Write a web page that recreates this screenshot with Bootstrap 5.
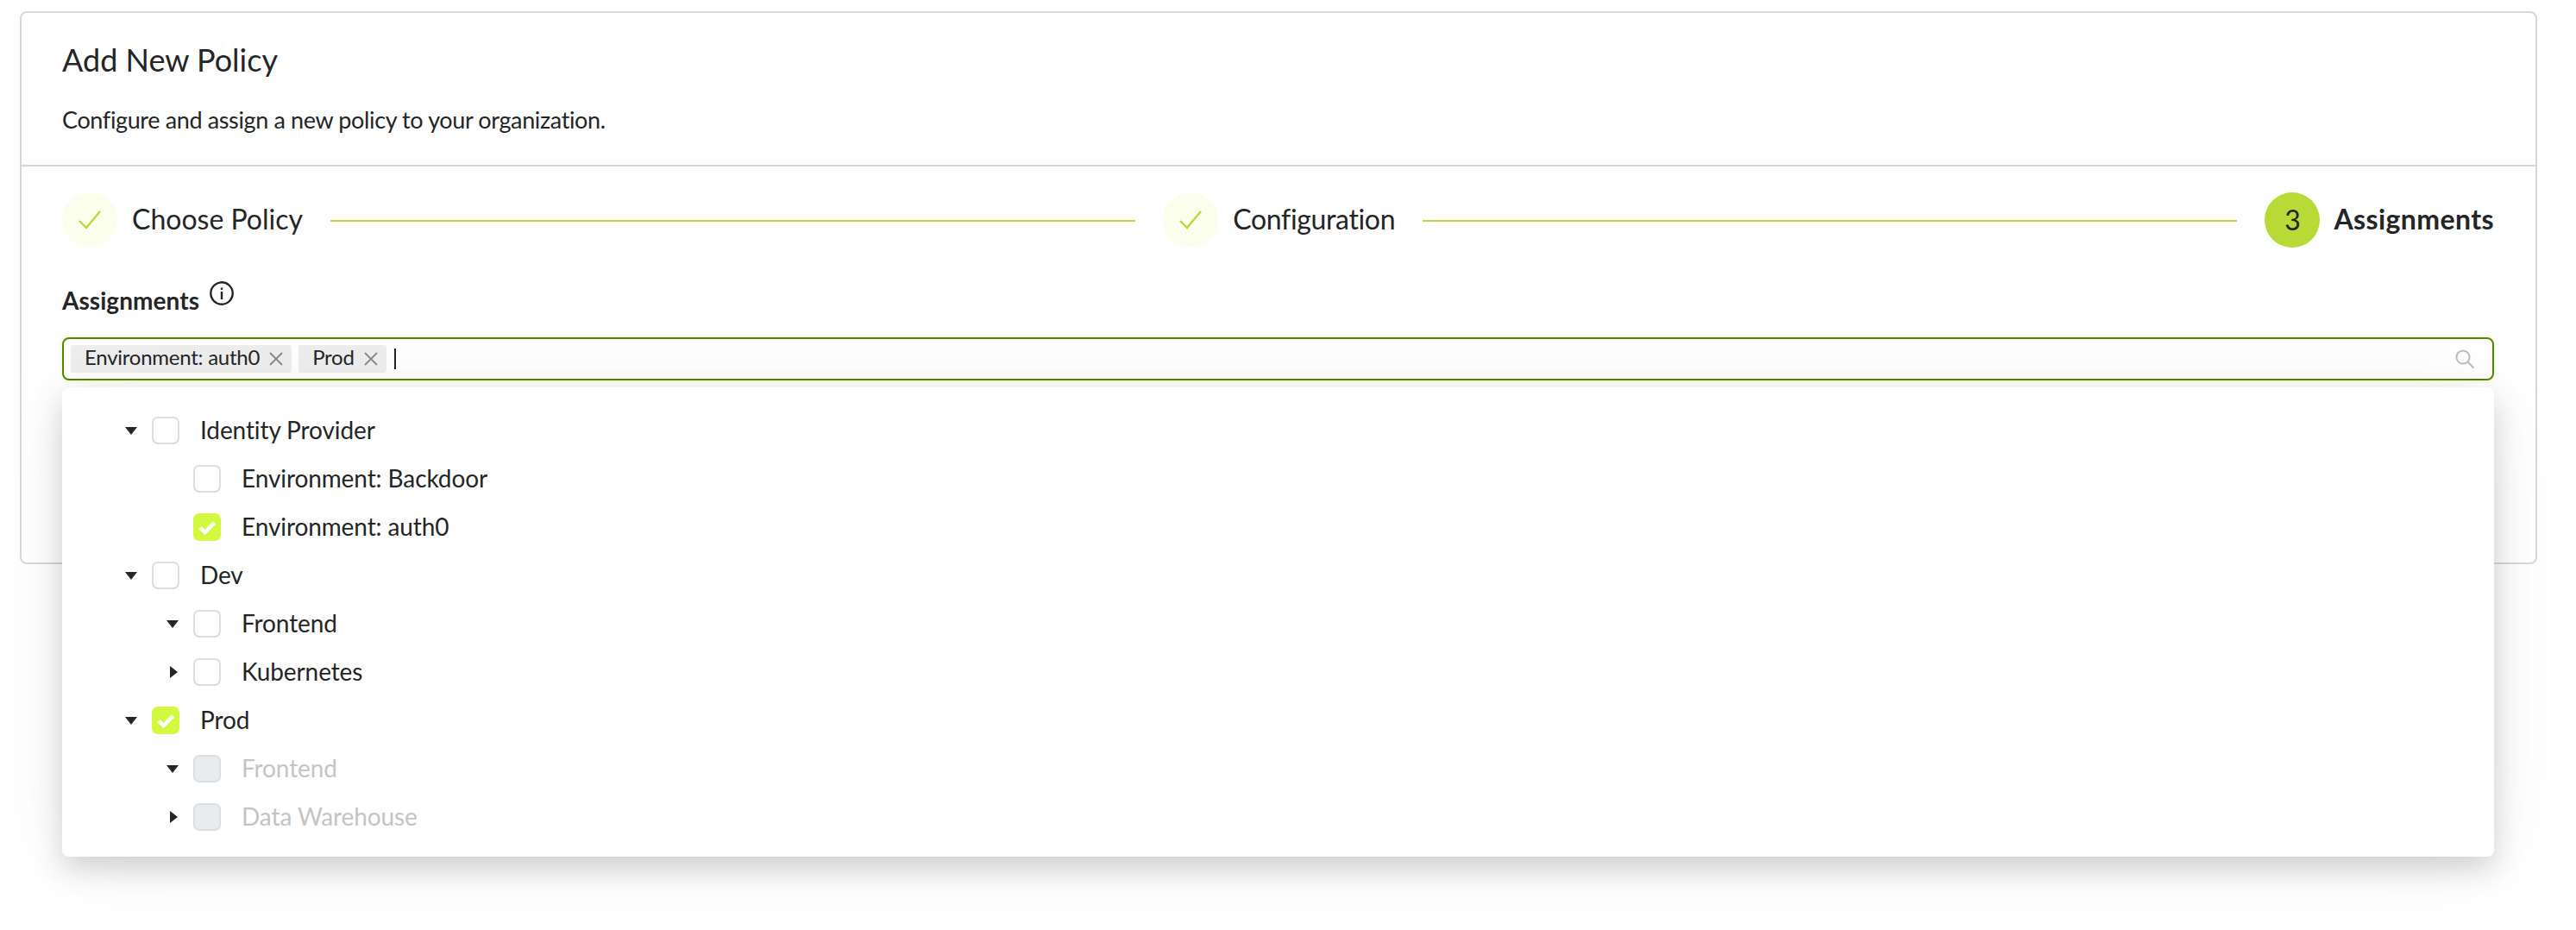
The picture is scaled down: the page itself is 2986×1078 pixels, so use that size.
<!DOCTYPE html>
<html lang="en">
<head>
<meta charset="utf-8">
<title>Add New Policy</title>
<link href="https://cdn.jsdelivr.net/npm/bootstrap@5.3.0/dist/css/bootstrap.min.css" rel="stylesheet">
<style>
:root{--ink:#232527;--lime:#b7da37;--line:#d8d8d8;}
html,body{height:100%;}
body{background:#fff;color:var(--ink);font-family:"Lato","Open Sans",sans-serif;overflow:hidden;}
.policy-card{margin:13px 45px 0 23px;height:641px;border:2px solid var(--line);border-radius:8px;background:#fff;}
.policy-head{height:178px;padding:32px 0 0 47px;border-bottom:2px solid var(--line);}
.policy-title{font-size:36px;font-weight:400;line-height:44px;margin:0 0 30px;}
.policy-sub{font-size:27px;letter-spacing:-.37px;line-height:36px;margin:0;}
.policy-main{padding:30px 48px 0 47px;position:relative;}
.stepper{height:64px;}
.step-dot{width:64px;height:64px;flex:none;border-radius:50%;background:#fcfeed;}
.step-dot.current{background:var(--lime);font-size:32px;}
.step-text{font-size:32px;line-height:40px;margin:0 0 3px 17px;flex:none;}
.step-text.mid{letter-spacing:-.35px;}
.step-text.current{font-weight:700;letter-spacing:.4px;margin-left:16px;}
.step-line{height:2px;background:var(--lime);margin:2px 32px 0;}
.step-line.first{flex:932 1 0;}
.step-line.second{flex:943 1 0;}
.field-label{font-size:28px;font-weight:700;letter-spacing:.05px;line-height:34px;margin:44px 0 0;}
.field-tip{margin:-5px 0 0 12px;}
.picker{height:50px;margin-top:26px;border:2px solid #4f8a00;border-radius:8px;padding:0 21px 0 8px;box-shadow:0 0 0 3px #fbfee9;}
.chip{height:32px;background:#eee;border-radius:3px;font-size:24px;letter-spacing:-.25px;padding:0 10px 0 16px;margin-right:8px;}
.chip-text{line-height:26px;margin-bottom:5px;}
.chip-x{margin-left:11px;}
.text-cursor{width:2px;height:24px;background:var(--ink);margin-left:1px;}
.tree-menu{position:absolute;left:47px;right:48px;top:256px;height:544px;padding:22px 0 0 73px;background:#fff;border-radius:8px;box-shadow:0 14px 34px rgba(0,0,0,.17),0 6px 110px rgba(0,0,0,.05);}
.tree-row{height:56px;}
.tree-row.lvl2{padding-left:48px;}
.caret-slot{width:31px;flex:none;}
.tree-box.form-check-input{width:32px;height:32px;margin:0;flex:none;border:2px solid #dedede;border-radius:7px;float:none;}
.tree-box.form-check-input:checked{background-color:#d1fa3f;border-color:#d1fa3f;background-size:100% 100%;background-image:url("data:image/svg+xml,%3csvg xmlns='http://www.w3.org/2000/svg' viewBox='0 0 28 28'%3e%3cpath fill='none' stroke='white' stroke-width='4.500' d='M6 14.500l5.500 5.500L22.500 9'/%3e%3c/svg%3e");}
.tree-box.form-check-input:disabled{background-color:#e9ecef;border-color:#dedede;opacity:1;}
.tree-label{font-size:28px;letter-spacing:-.1px;line-height:36px;margin:0 0 3px 24px;}
.form-check-input:disabled ~ .tree-label.off{color:#c4c4c4;opacity:1;}
</style>
</head>
<body>
<div class="card policy-card">
  <div class="policy-head">
    <h1 class="policy-title">Add New Policy</h1>
    <p class="policy-sub">Configure and assign a new policy to your organization.</p>
  </div>
  <div class="policy-main">
    <div class="stepper d-flex align-items-center">
      <span class="step-dot d-flex align-items-center justify-content-center">
        <svg width="26" height="22" viewBox="0 0 26 22"><path d="M1 12l8 8L25 1" fill="none" stroke="#b7da37" stroke-width="2.4"/></svg>
      </span>
      <span class="step-text">Choose Policy</span>
      <span class="step-line first"></span>
      <span class="step-dot d-flex align-items-center justify-content-center">
        <svg width="26" height="22" viewBox="0 0 26 22"><path d="M1 12l8 8L25 1" fill="none" stroke="#b7da37" stroke-width="2.4"/></svg>
      </span>
      <span class="step-text mid">Configuration</span>
      <span class="step-line second"></span>
      <span class="step-dot current d-flex align-items-center justify-content-center">3</span>
      <span class="step-text current">Assignments</span>
    </div>
    <div class="d-flex align-items-start field-label">
      <span>Assignments</span>
      <svg class="field-tip" width="28" height="28" viewBox="0 0 28 28"><circle cx="14" cy="14" r="12.7" fill="none" stroke="#232527" stroke-width="2.4"/><rect x="12.800" y="12" width="2.400" height="9" fill="#232527"/><rect x="12.800" y="7.500" width="2.400" height="2.400" fill="#232527"/></svg>
    </div>
    <div class="picker d-flex align-items-center">
      <span class="chip d-inline-flex align-items-center"><span class="chip-text">Environment: auth0</span>
        <svg class="chip-x" width="16" height="16" viewBox="0 0 16 16"><path d="M1 1l14 14M15 1L1 15" stroke="#8a8a8a" stroke-width="1.8"/></svg>
      </span>
      <span class="chip d-inline-flex align-items-center"><span class="chip-text">Prod</span>
        <svg class="chip-x" width="16" height="16" viewBox="0 0 16 16"><path d="M1 1l14 14M15 1L1 15" stroke="#8a8a8a" stroke-width="1.8"/></svg>
      </span>
      <span class="text-cursor"></span>
      <svg class="ms-auto" width="22" height="22" viewBox="0 0 22 22"><circle cx="9" cy="9" r="7.6" fill="none" stroke="#bdbdbd" stroke-width="2"/><path d="M14.500 14.500L21.500 21.500" stroke="#bdbdbd" stroke-width="2"/></svg>
    </div>
    <div class="tree-menu">
      <div class="tree-row d-flex align-items-center"><span class="caret-slot"><svg width="14" height="9" viewBox="0 0 14 9" class="d-block"><path d="M0 0h14L7 9z" fill="#232527"/></svg></span><input class="form-check-input tree-box" type="checkbox" id="t1"><label class="form-check-label tree-label" for="t1">Identity Provider</label></div>
      <div class="tree-row lvl2 d-flex align-items-center"><span class="caret-slot"></span><input class="form-check-input tree-box" type="checkbox" id="t2"><label class="form-check-label tree-label" for="t2">Environment: Backdoor</label></div>
      <div class="tree-row lvl2 d-flex align-items-center"><span class="caret-slot"></span><input class="form-check-input tree-box" type="checkbox" id="t3" checked><label class="form-check-label tree-label" for="t3">Environment: auth0</label></div>
      <div class="tree-row d-flex align-items-center"><span class="caret-slot"><svg width="14" height="9" viewBox="0 0 14 9" class="d-block"><path d="M0 0h14L7 9z" fill="#232527"/></svg></span><input class="form-check-input tree-box" type="checkbox" id="t4"><label class="form-check-label tree-label" for="t4">Dev</label></div>
      <div class="tree-row lvl2 d-flex align-items-center"><span class="caret-slot"><svg width="14" height="9" viewBox="0 0 14 9" class="d-block"><path d="M0 0h14L7 9z" fill="#232527"/></svg></span><input class="form-check-input tree-box" type="checkbox" id="t5"><label class="form-check-label tree-label" for="t5">Frontend</label></div>
      <div class="tree-row lvl2 d-flex align-items-center"><span class="caret-slot"><svg width="9" height="14" viewBox="0 0 9 14" class="d-block ms-1"><path d="M0 0v14l9-7z" fill="#232527"/></svg></span><input class="form-check-input tree-box" type="checkbox" id="t6"><label class="form-check-label tree-label" for="t6">Kubernetes</label></div>
      <div class="tree-row d-flex align-items-center"><span class="caret-slot"><svg width="14" height="9" viewBox="0 0 14 9" class="d-block"><path d="M0 0h14L7 9z" fill="#232527"/></svg></span><input class="form-check-input tree-box" type="checkbox" id="t7" checked><label class="form-check-label tree-label" for="t7">Prod</label></div>
      <div class="tree-row lvl2 d-flex align-items-center"><span class="caret-slot"><svg width="14" height="9" viewBox="0 0 14 9" class="d-block"><path d="M0 0h14L7 9z" fill="#232527"/></svg></span><input class="form-check-input tree-box" type="checkbox" id="t8" disabled><label class="form-check-label tree-label off" for="t8">Frontend</label></div>
      <div class="tree-row lvl2 d-flex align-items-center"><span class="caret-slot"><svg width="9" height="14" viewBox="0 0 9 14" class="d-block ms-1"><path d="M0 0v14l9-7z" fill="#232527"/></svg></span><input class="form-check-input tree-box" type="checkbox" id="t9" disabled><label class="form-check-label tree-label off" for="t9">Data Warehouse</label></div>
    </div>
  </div>
</div>
</body>
</html>
